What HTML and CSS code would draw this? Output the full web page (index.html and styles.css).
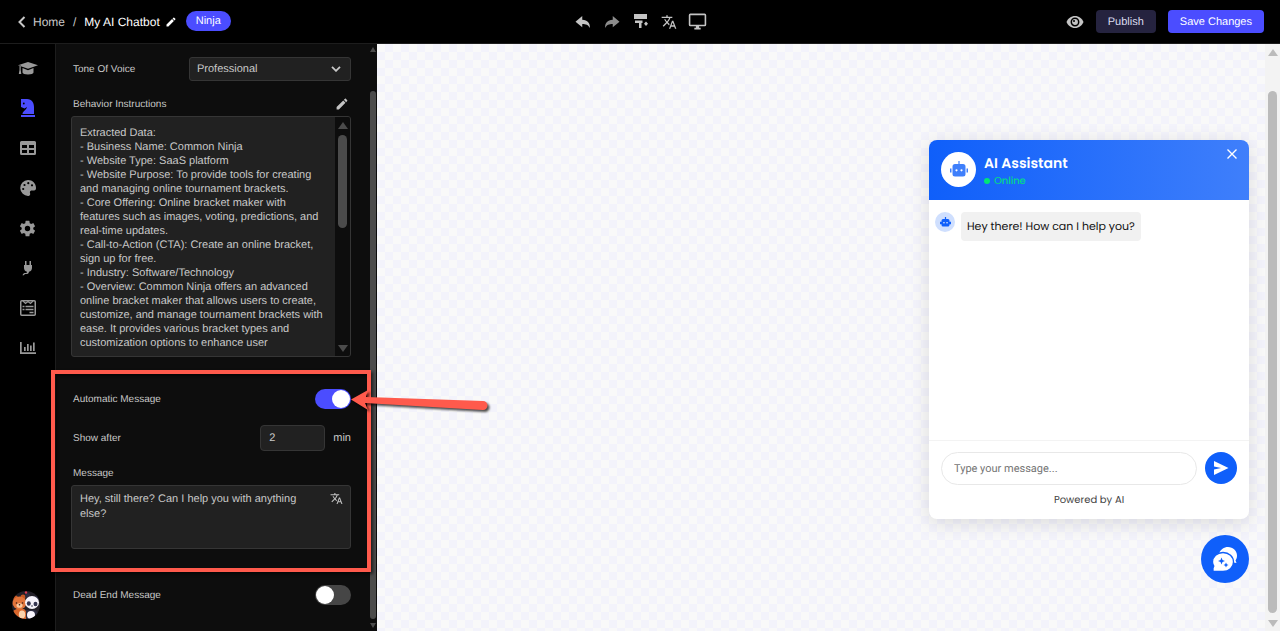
FILE: index.html
```
<!DOCTYPE html>
<html lang="en">
<head>
  <meta charset="UTF-8">
  <meta name="viewport" content="width=device-width, initial-scale=1.0">
  <title>My AI Chatbot</title>
  <link rel="stylesheet" href="styles.css">
</head>
<body>
  <header class="topbar">
    <div class="crumbs">
      <a href="#" class="back">
        <svg width="8" height="12" viewBox="0 0 8 12"><path d="M6.5 1L1.5 6l5 5" fill="none" stroke="currentColor" stroke-width="2"/></svg>
        Home
      </a>
      <span class="slash">/</span>
      <span class="project">My AI Chatbot</span>
      <button class="icon-btn rename" aria-label="Rename">
        <svg width="10" height="10" viewBox="2 2 20 20"><path d="M20.7 7c.4-.4.4-1 0-1.4l-2.3-2.3c-.4-.4-1-.4-1.4 0l-1.900 1.800 3.800 3.800M3 17.200V21h3.800L17.800 9.900l-3.700-3.700L3 17.200z" fill="currentColor"/></svg>
      </button>
      <span class="plan">Ninja</span>
    </div>

    <div class="tools">
      <button class="icon-btn" aria-label="Undo">
        <svg width="18" height="18" viewBox="0 0 24 24"><path d="M11 9V4L2 11.500l9 7.500v-4.500c5 0 8 1 10 5.500 1-6-3-11-10-11z" fill="currentColor"/></svg>
      </button>
      <button class="icon-btn dim" aria-label="Redo">
        <svg width="18" height="18" viewBox="0 0 24 24"><path d="M13 9V4l9 7.500-9 7.500v-4.500c-5 0-8 1-10 5.500-1-6 3-11 10-11z" fill="currentColor"/></svg>
      </button>
      <button class="icon-btn" aria-label="Theme">
        <svg width="18" height="18" viewBox="0 0 18 18"><path d="M2 1h13v5H2zM3 7.500h7.500V10h-1v5H7v-5H3zM14 8.500l2 2.200-2 2.200-2-2.200z" fill="currentColor"/></svg>
      </button>
      <button class="icon-btn" aria-label="Translate">
        <svg width="16" height="16" viewBox="0 0 24 24"><path d="M12.870 15.070l-2.540-2.510.03-.03A17.500 17.500 0 0 0 14.070 6H17V4h-7V2H8v2H1v2h11.170C11.500 7.920 10.440 9.750 9 11.350 8.070 10.320 7.300 9.190 6.690 8h-2c.73 1.630 1.730 3.170 2.980 4.560l-5.090 5.020L4 19l5-5 3.110 3.110.76-2.040zM18.500 10h-2L12 22h2l1.120-3h4.750L21 22h2l-4.500-12zm-2.620 7l1.620-4.330L19.120 17h-3.240z" fill="currentColor"/></svg>
      </button>
      <button class="icon-btn" aria-label="Desktop preview">
        <svg width="19" height="19" viewBox="0 0 24 24"><path d="M21 16H3V4h18m0-2H3a2 2 0 0 0-2 2v12a2 2 0 0 0 2 2h7v2H8v2h8v-2h-2v-2h7a2 2 0 0 0 2-2V4a2 2 0 0 0-2-2z" fill="currentColor"/></svg>
      </button>
    </div>

    <div class="actions">
      <button class="icon-btn" aria-label="Preview">
        <svg width="18" height="12" viewBox="0 0 18 12"><path d="M9 0C5 0 2 2.500.5 6 2 9.500 5 12 9 12s7-2.500 8.500-6C16 2.500 13 0 9 0z" fill="currentColor"/><circle cx="9" cy="6" r="3.700" fill="none" stroke="#000" stroke-width="1.500"/><circle cx="8" cy="5" r="1" fill="#000"/></svg>
      </button>
      <button class="btn publish">Publish</button>
      <button class="btn save">Save Changes</button>
    </div>
  </header>

  <div class="workspace">
    <nav class="rail">
      <a href="#" aria-label="Training">
        <svg width="20" height="16" viewBox="0 0 20 16"><path d="M10 2L0 5.200l10 3.500 10-3.500zM4.500 8v4.500c0 1.200 2.500 2 5.500 2s5.500-.8 5.500-2V8L10 10.200zM1.500 5.500h1.200V10l.6 4H.8l.7-4z" fill="currentColor"/></svg>
      </a>
      <a href="#" class="active" aria-label="Behavior">
        <svg width="16" height="20" viewBox="0 0 16 20"><path d="M1 1h6c5 0 7 4 7 8v7H2.500c0-3 3.500-3.500 4.500-7l-2.500 1.500L1 9z" fill="currentColor"/><circle cx="3.800" cy="5.500" r=".9" fill="#000"/><path d="M1 17h14v2H1z" fill="currentColor"/></svg>
      </a>
      <a href="#" aria-label="Content">
        <svg width="16" height="14" viewBox="0 0 16 14"><path d="M1.500 0h13A1.500 1.500 0 0 1 16 1.500v11a1.500 1.500 0 0 1-1.500 1.500h-13A1.500 1.500 0 0 1 0 12.500v-11A1.500 1.500 0 0 1 1.500 0zM2 4v3h5V4zm7 0v3h5V4zM2 9v3h5V9zm7 0v3h5V9z" fill="currentColor" fill-rule="evenodd"/></svg>
      </a>
      <a href="#" aria-label="Look and feel">
        <svg width="16" height="16" viewBox="0 0 16 16"><path d="M8 0a8 8 0 1 0 .5 16c1.500 0 2-1.500 1.500-3s.5-2.500 2-2.500h2c1.500 0 2-1 2-2.500C16 3.500 12.500 0 8 0z" fill="currentColor"/><g fill="#000"><circle cx="3.200" cy="9" r="1.100"/><circle cx="4.500" cy="5" r="1.100"/><circle cx="8.300" cy="3.200" r="1.100"/><circle cx="12" cy="5.300" r="1.100"/></g></svg>
      </a>
      <a href="#" aria-label="Settings">
        <svg width="17" height="17" viewBox="1 1 22 22"><path d="M12 15.500a3.500 3.500 0 1 1 0-7 3.500 3.500 0 0 1 0 7m7.430-2.530a7 7 0 0 0 0-1.970l2.110-1.630c.19-.15.24-.42.12-.64l-2-3.460c-.12-.22-.39-.31-.61-.22l-2.490 1c-.52-.39-1.060-.73-1.690-.98l-.37-2.650A.5.5 0 0 0 14 2h-4a.5.5 0 0 0-.5.42l-.37 2.650c-.63.25-1.170.59-1.690.98l-2.490-1a.5.5 0 0 0-.61.22l-2 3.460c-.13.22-.07.49.12.64L4.570 11a7 7 0 0 0 0 1.970l-2.110 1.660a.5.5 0 0 0-.12.64l2 3.460c.12.22.39.3.61.22l2.490-1.010c.52.4 1.060.74 1.690.99l.37 2.650c.04.24.25.42.5.42h4c.25 0 .46-.18.5-.42l.37-2.650c.63-.26 1.170-.59 1.690-.99l2.490 1.010c.22.08.49 0 .61-.22l2-3.460a.5.5 0 0 0-.12-.64z" fill="currentColor"/></svg>
      </a>
      <a href="#" aria-label="Integrations">
        <svg width="12" height="16" viewBox="0 0 12 16"><path d="M3 1h1.500v4H3zM7.500 1H9v4H7.500zM2 5h8v3a4 4 0 0 1-3 3.700c-.3 2-1.500 2.300-3 2.300-1 0-1.500.2-2 1.200H.5C1 13.500 2 13 3.500 13c1 0 1.500-.3 1.500-1.300A4 4 0 0 1 2 8z" fill="currentColor"/></svg>
      </a>
      <a href="#" aria-label="Forms">
        <svg width="16" height="16" viewBox="0 0 16 16" fill="none" stroke="currentColor"><rect x=".75" y=".75" width="14.500" height="14.500" rx="1" stroke-width="1.500"/><path d="M3 1l2.500 2.500L8 1.500l2.500 2L13 1" stroke-width="1.200"/><path d="M2.500 6.500h2m1 0h8m-11 3h2m1 0h8m-4 3h4" stroke-width="1.400"/></svg>
      </a>
      <a href="#" aria-label="Analytics">
        <svg width="16" height="12" viewBox="0 0 16 12"><path d="M0 0h1.700v10.300H16V12H0zM4 5h1.700v4H4zM7 2h1.700v7H7zM10 3.500h1.700V9H10zM13 .5h1.700V9H13z" fill="currentColor"/></svg>
      </a>
      <!-- account avatar: bear and panda -->
      <a href="#" class="avatar" aria-label="Account">
        <svg width="28" height="28" viewBox="0 0 28 28">
          <defs><clipPath id="avatarClip"><circle cx="14" cy="14" r="14"/></clipPath></defs>
          <g clip-path="url(#avatarClip)">
            <path d="M0 0h28v28H0z" fill="#221f27"/>
            <path d="M1 28c-2-6 0-10 5-10h6c3 2 3 6 2 10z" fill="#d9672c"/>
            <circle cx="3.500" cy="7" r="2.500" fill="#c65824"/><circle cx="11" cy="6" r="2.500" fill="#c65824"/>
            <ellipse cx="7.500" cy="12" rx="7" ry="6.500" fill="#e2743a"/>
            <ellipse cx="7.500" cy="14.500" rx="3" ry="2.300" fill="#f8c9a0"/>
            <circle cx="4.500" cy="12" r=".8" fill="#3b1d14"/><circle cx="10.500" cy="12" r=".8" fill="#3b1d14"/><circle cx="7.500" cy="13.800" r=".8" fill="#3b1d14"/>
            <ellipse cx="10" cy="23.500" rx="3.200" ry="4" fill="#fbd3ad"/>
            <path d="M14 19h8c4 1 5 5 3 9H14z" fill="#2c2c40"/>
            <ellipse cx="19" cy="24" rx="4" ry="4" fill="#f6f3fb"/>
            <circle cx="15.500" cy="4.500" r="2.500" fill="#2c2c40"/><circle cx="25" cy="7" r="2.500" fill="#2c2c40"/>
            <ellipse cx="20" cy="11.500" rx="7" ry="6.500" fill="#f6f3fb"/>
            <ellipse cx="16.800" cy="12.500" rx="2" ry="2.300" fill="#343450"/><ellipse cx="23.500" cy="13" rx="2" ry="2.300" fill="#343450"/>
            <circle cx="20" cy="15" r=".8" fill="#2c2c40"/>
            <circle cx="14" cy="1.500" r="1.200" fill="#df3d54"/>
          </g>
        </svg>
      </a>
    </nav>

    <aside class="panel">
      <form class="settings">
        <div class="row tone">
          <label for="tone">Tone Of Voice</label>
          <div class="select">
            <select id="tone"><option>Professional</option></select>
            <svg width="10" height="6" viewBox="0 0 10 6"><path d="M1 .8l4 4 4-4" fill="none" stroke="currentColor" stroke-width="1.800"/></svg>
          </div>
        </div>

        <div class="row heading">
          <label for="instructions">Behavior Instructions</label>
          <button type="button" class="icon-btn" aria-label="Edit instructions">
            <svg width="12" height="12" viewBox="2 2 20 20"><path d="M20.700 7c.4-.4.4-1 0-1.400l-2.300-2.300c-.4-.4-1-.4-1.400 0l-1.900 1.800 3.800 3.800M3 17.200V21h3.800L17.800 9.900l-3.700-3.700L3 17.200z" fill="currentColor"/></svg>
          </button>
        </div>
        <div class="box instructions">
          <textarea id="instructions">Extracted Data:
- Business Name: Common Ninja
- Website Type: SaaS platform
- Website Purpose: To provide tools for creating and managing online tournament brackets.
- Core Offering: Online bracket maker with features such as images, voting, predictions, and real-time updates.
- Call-to-Action (CTA): Create an online bracket, sign up for free.
- Industry: Software/Technology
- Overview: Common Ninja offers an advanced online bracket maker that allows users to create, customize, and manage tournament brackets with ease. It provides various bracket types and customization options to enhance user</textarea>
          <div class="scroll dark"><i class="up"></i><i class="thumb"></i><i class="down"></i></div>
        </div>

        <div class="row auto">
          <label for="auto">Automatic Message</label>
          <input type="checkbox" class="toggle" id="auto" checked>
        </div>
        <div class="row after">
          <label for="after">Show after</label>
          <div class="minutes">
            <input type="text" id="after" value="2">
            <span>min</span>
          </div>
        </div>
        <div class="row heading">
          <label for="message">Message</label>
        </div>
        <div class="box message">
          <textarea id="message">Hey, still there? Can I help you with anything else?</textarea>
          <button type="button" class="icon-btn" aria-label="Translate message">
            <svg width="13" height="13" viewBox="0 0 24 24"><path d="M12.870 15.070l-2.540-2.510.03-.03A17.500 17.500 0 0 0 14.070 6H17V4h-7V2H8v2H1v2h11.170C11.500 7.920 10.440 9.750 9 11.350 8.070 10.320 7.300 9.190 6.690 8h-2c.73 1.630 1.730 3.170 2.980 4.560l-5.090 5.020L4 19l5-5 3.110 3.110.76-2.040zM18.500 10h-2L12 22h2l1.120-3h4.750L21 22h2l-4.500-12zm-2.620 7l1.620-4.330L19.120 17h-3.240z" fill="currentColor"/></svg>
          </button>
        </div>
        <div class="row deadend">
          <label for="deadend">Dead End Message</label>
          <input type="checkbox" class="toggle" id="deadend">
        </div>
      </form>
      <div class="scroll slim"><i class="up"></i><i class="thumb"></i><i class="down"></i></div>
    </aside>

    <main class="canvas">
      <section class="chat">
        <header class="chat-head">
          <span class="bot">
            <svg width="18" height="16" viewBox="0 0 18 16"><path d="M8.400 0h1.200v3H13a2.500 2.500 0 0 1 2.500 2.500V13a2.500 2.500 0 0 1-2.500 2.500H5A2.500 2.500 0 0 1 2.500 13V5.500A2.500 2.500 0 0 1 5 3h3.400zM0 7.500h1.500v4H0zM16.500 7.500H18v4h-1.500z" fill="currentColor"/><circle cx="6.500" cy="9.300" r="1.100" fill="#fff"/><circle cx="11.500" cy="9.300" r="1.100" fill="#fff"/></svg>
          </span>
          <div class="who">
            <h2>AI Assistant</h2>
            <p class="online">Online</p>
          </div>
          <button class="icon-btn close" aria-label="Close">
            <svg width="10" height="10" viewBox="0 0 10 10"><path d="M.5.500l9 9m0-9l-9 9" stroke="currentColor" stroke-width="1.400"/></svg>
          </button>
        </header>
        <div class="thread">
          <span class="bot small">
            <svg width="11" height="10" viewBox="0 0 18 16"><path d="M8 0h2v3h3a2.500 2.500 0 0 1 2.500 2.500V13a2.500 2.500 0 0 1-2.500 2.500H5A2.500 2.500 0 0 1 2.500 13V5.500A2.500 2.500 0 0 1 5 3h3zM0 7.500h2.500v4H0zM15.500 7.500H18v4h-2.500z" fill="currentColor"/><circle cx="6.500" cy="9.300" r="1.200" fill="#fff"/><circle cx="11.500" cy="9.300" r="1.200" fill="#fff"/></svg>
          </span>
          <p class="bubble">Hey there! How can I help you?</p>
        </div>
        <footer class="chat-foot">
          <div class="compose">
            <input type="text" placeholder="Type your message..." aria-label="Type your message">
            <button class="send" aria-label="Send">
              <svg width="16" height="14" viewBox="0 0 16 14"><path d="M1 0l14.500 7L1 14V8.500L8 7 1 5.500z" fill="currentColor"/></svg>
            </button>
          </div>
          <p class="powered">Powered by AI</p>
        </footer>
      </section>
      <button class="launcher" aria-label="Toggle chat">
        <svg width="26" height="26" viewBox="0 0 26 26"><path d="M7 7.500C8.500 3.500 12 1 16 1c5 0 9 3.700 9 8.500 0 2-.5 3.500-1.500 5l1 2.500-3-.5z" fill="#fff"/><path d="M11 6.500c6 0 10.500 4 10.500 9.500S17 25.500 11 25.500H1v-3.500L1.800 20A9 9 0 0 1 .5 16C.5 10.500 5 6.500 11 6.500z" fill="#fff" stroke="#0f5ffa" stroke-width="1.300"/><path d="M9.500 11.500l1 2.500 2.500 1-2.500 1-1 2.500-1-2.500-2.500-1 2.500-1zM14 16.500l.8 1.700 1.700.8-1.700.8-.8 1.700-.8-1.700-1.700-.8 1.700-.8z" fill="#0f5ffa"/></svg>
      </button>
    </main>
    <div class="scroll page"><i class="up"></i><i class="thumb"></i><i class="down"></i></div>
  </div>

  <!-- callout drawn over the editor -->
  <div class="callout"></div>
  <svg class="arrow" width="144" height="32" viewBox="0 0 144 32"><path d="M1 11.500L18 2l-2 7 117 4a4.500 4.500 0 0 1 0 9L15 15 18 22z" fill="#ff5a4c"/></svg>
</body>
</html>
```
FILE: styles.css
```
* { box-sizing: border-box; }
body { margin: 0; height: 100vh; display: flex; flex-direction: column; overflow: hidden; background: #000; color: #c8c8c8; font-family: Arial, "Liberation Sans", sans-serif; font-size: 11px; text-rendering: geometricPrecision; }
button, input, select, textarea { font: inherit; color: inherit; text-rendering: inherit; }
button { cursor: pointer; }
svg { display: block; }
a { color: inherit; text-decoration: none; }
h2, p { margin: 0; }
.icon-btn { background: none; border: 0; padding: 0; color: #c4c4c4; }
.icon-btn.dim { color: #8c8c8c; }

/* top bar */
.topbar { height: 44px; flex: none; display: grid; grid-template-columns: 1fr auto 1fr; align-items: center; border-bottom: 1px solid #1d1d1d; padding: 0 16px; }
.crumbs, .tools, .actions { display: flex; align-items: center; }
.crumbs { font-size: 12px; padding-left: 2px; }
.back { display: flex; align-items: center; gap: 7px; }
.slash { margin: 0 8px; }
.project { color: #fff; }
.rename { margin: 0 10px 0 6px; color: #fff; }
.plan { background: #4b4dff; color: #fff; border-radius: 10px; padding: 0 10px; height: 20px; line-height: 20px; font-size: 11px; margin-bottom: 2px; }
.tools { gap: 11px; }
.actions { justify-content: flex-end; gap: 12px; }
.btn { border: 0; border-radius: 4px; height: 23px; padding: 0 12px; font-size: 11px; color: #fff; }
.publish { background: #25233f; color: #dcdcf0; }
.save { background: #4b4dff; }

.workspace { flex: 1; display: flex; min-height: 0; }

/* icon rail */
.rail { width: 56px; flex: none; display: flex; flex-direction: column; border-right: 1px solid #1d1d1d; padding: 4px 0 12px; color: #999; }
.rail a { height: 40px; display: flex; align-items: center; justify-content: center; }
.rail .active { color: #4b4dff; }
.rail .avatar { height: 28px; margin-top: auto; padding-right: 3px; }

/* settings panel */
.panel { width: 321px; flex: none; display: flex; background: #0d0d0d; }
.settings { flex: 1; padding: 13px 17px 0 15px; }
.row { display: flex; align-items: center; justify-content: space-between; }
.row label { padding-left: 2px; font-size: 10px; }
.heading { height: 24px; padding-right: 3px; }
.tone { margin-bottom: 11px; }
.select { position: relative; width: 162px; }
.select select { width: 100%; height: 24px; appearance: none; background: #212121; border: 1px solid #353535; border-radius: 3px; padding: 0 7px; }
.select svg { position: absolute; right: 10px; top: 9px; pointer-events: none; }
.box { display: flex; background: #212121; border: 1px solid #353535; border-radius: 3px; overflow: hidden; }
.box textarea { flex: 1; min-width: 0; border: 0; background: none; resize: none; overflow: hidden; outline: 0; padding: 6px 8px; line-height: 15px; }
.instructions { height: 241px; }
.instructions textarea { padding: 9px 10px 0 8px; line-height: 14px; }
.auto { height: 20px; margin-top: 32px; }
.after { height: 26px; margin: 16px 0 10px; }
.minutes { display: flex; align-items: center; gap: 8px; }
.minutes input { width: 65px; height: 26px; background: #212121; border: 1px solid #353535; border-radius: 4px; padding: 0 8px; }
.message { height: 64px; align-items: flex-start; padding-right: 7px; }
.message textarea { height: 62px; }
.message .icon-btn { margin-top: 6px; }
.deadend { height: 20px; margin-top: 36px; }
.toggle { appearance: none; width: 36px; height: 20px; margin: 0; border-radius: 10px; background: #464646; padding: 1px; cursor: pointer; }
.toggle::before { content: ""; display: block; width: 18px; height: 18px; border-radius: 50%; background: #fff; }
.toggle:checked { background: #4b4dff; padding-left: 17px; }

/* scroll bars */
.scroll { --bar: #4b4b4b; flex: none; display: flex; flex-direction: column; align-items: center; }
.scroll .up { border: 5px solid transparent; border-top: 0; border-bottom: 7px solid var(--bar); }
.scroll .down { border: 5px solid transparent; border-bottom: 0; border-top: 7px solid var(--bar); margin-top: auto; }
.scroll .thumb { width: 9px; border-radius: 5px; background: var(--bar); }
.dark { width: 15px; background: #0d0d0d; padding: 5px 0 4px; }
.dark .thumb { height: 93px; margin-top: 6px; }
.slim { width: 9px; padding: 3px 0 3px; }
.slim .up { border-width: 0 3px 5px; }
.slim .down { border-width: 5px 3px 0; }
.slim .thumb { width: 6px; flex: 1; margin: 39px 0 4px; }
.page { --bar: #bbb; width: 15px; background: #f3f3f3; padding: 5px 0 4px; }
.page .thumb { flex: 1; margin: 35px 0 7px; }

/* preview area */
.canvas { flex: 1; min-width: 0; display: flex; flex-direction: column; align-items: flex-end; justify-content: flex-end; gap: 16px; padding: 0 16px 48px; background: #f9f9f9 conic-gradient(#f3f3fb 25%, transparent 0 50%, #f3f3fb 0 75%, transparent 0) 0 0 / 16px 16px; font-family: Poppins, Inter, sans-serif; }
.chat { width: 320px; height: 379px; display: flex; flex-direction: column; background: #fff; border-radius: 8px; overflow: hidden; box-shadow: 0 4px 20px rgba(0,0,0,0.12); }
.chat-head { height: 60px; display: flex; align-items: center; gap: 8px; padding: 0 12px 2px; color: #fff; background: linear-gradient(90deg, #0f5ffa, #3f7ffb); }
.bot { width: 35px; height: 35px; flex: none; display: flex; align-items: center; justify-content: center; border-radius: 50%; background: #fff; color: #3f7ffb; }
.bot.small { width: 20px; height: 20px; background: #cfdffe; color: #0f5ffa; }
.who { flex: 1; padding-top: 4px; }
.who h2 { font-size: 14px; line-height: 20px; font-weight: 600; }
.online { display: flex; align-items: center; gap: 4px; font-size: 10px; line-height: 16px; color: #00e676; }
.online::before { content: ""; width: 6px; height: 6px; border-radius: 50%; background: #00e676; }
.close { align-self: flex-start; margin-top: 9px; color: #fff; }
.thread { flex: 1; display: flex; align-items: flex-start; gap: 6px; padding: 12px 6px; }
.bubble { background: #f1f1f1; color: #111; border-radius: 4px; padding: 5px 6px; font-size: 11px; line-height: 19px; }
.chat-foot { border-top: 1px solid #f3f3f3; padding: 11px 12px; }
.compose { display: flex; gap: 8px; }
.compose input { flex: 1; min-width: 0; height: 33px; border: 1px solid #e8e8e8; border-radius: 17px; padding: 0 12px; font-family: Roboto, sans-serif; font-size: 11px; color: #333; background: #fff; }
.compose input::placeholder { color: #757575; }
.send { width: 32px; height: 32px; border: 0; border-radius: 50%; padding: 0; display: flex; align-items: center; justify-content: center; background: #0f5ffa; color: #fff; }
.powered { margin-top: 7px; text-align: center; font-size: 10px; line-height: 16px; color: #444; }
.launcher { width: 48px; height: 48px; flex: none; border: 0; border-radius: 50%; padding: 0; display: flex; align-items: center; justify-content: center; background: #0f5ffa; }

/* callout */
.callout { position: absolute; left: 51px; top: 370px; width: 320px; height: 202px; border: 4px solid #ff5a4c; box-shadow: 2px 2px 3px rgba(0,0,0,0.6), inset 2px 2px 3px rgba(0,0,0,0.6); pointer-events: none; }
.arrow { position: absolute; left: 350px; top: 388px; filter: drop-shadow(2px 2px 1px rgba(0,0,0,0.7)); pointer-events: none; }
```
